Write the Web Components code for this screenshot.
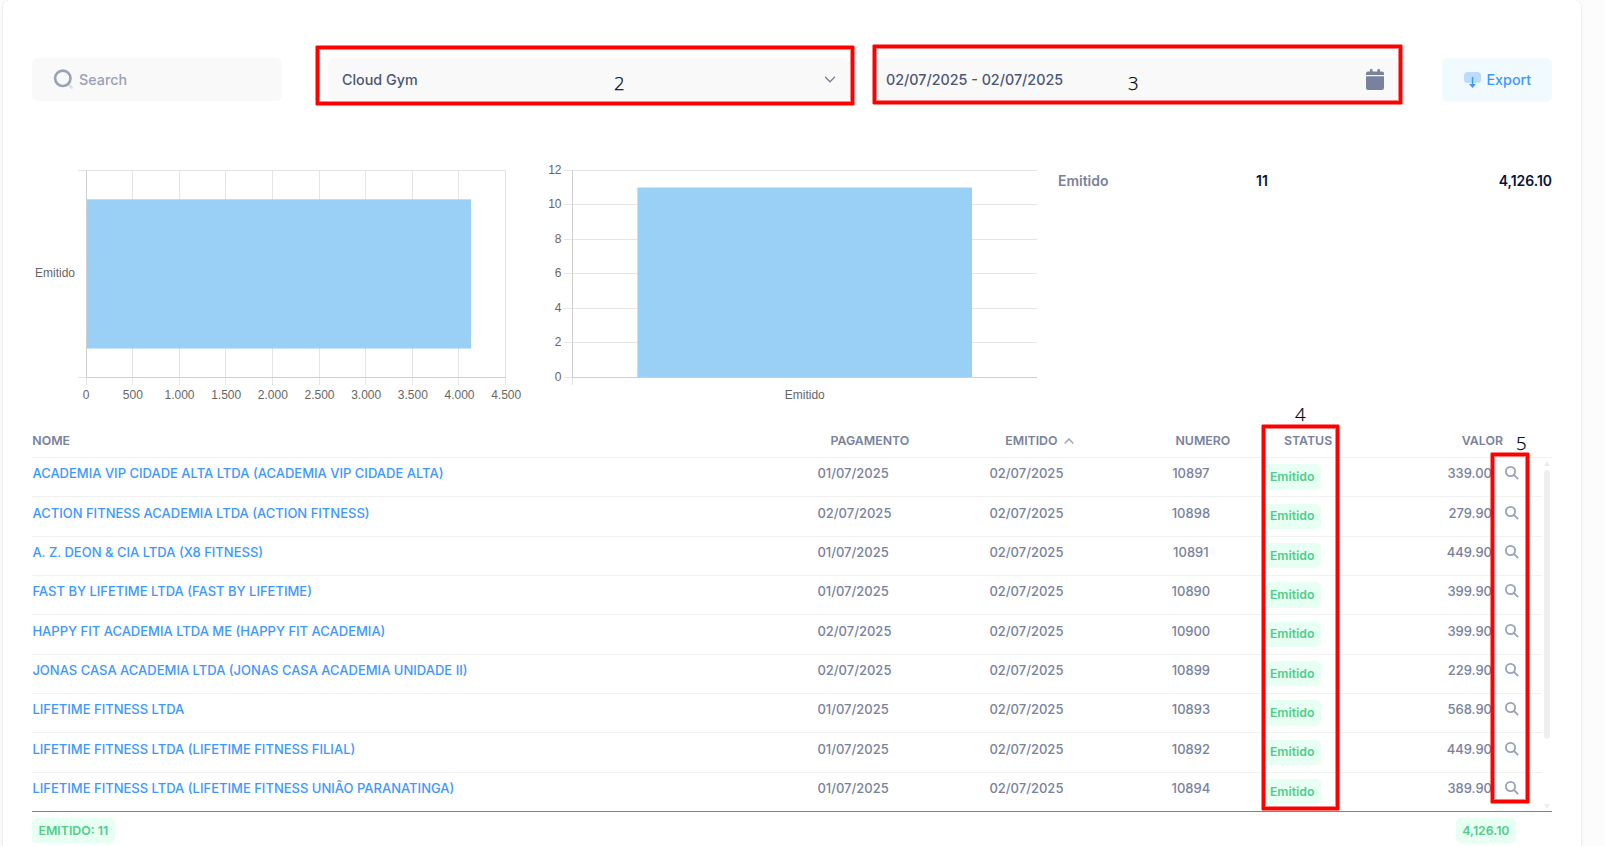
<!DOCTYPE html>
<html lang="pt-BR">
<head>
<meta charset="UTF-8">
<title>Notas emitidas</title>
<style>
  :root {
    --gray-100: #f9f9f9;
    --gray-200: #f1f1f2;
    --gray-500: #99a1b7;
    --gray-600: #78829d;
    --gray-700: #4b5675;
    --primary: #3e97ff;
    --primary-light: #f1faff;
    --success: #50cd89;
    --success-light: #e8fff3;
  }
  body {
    margin: 0;
    height: 846px;
    overflow: hidden;
    background: #fcfcfc;
    font-family: Inter, "Liberation Sans", sans-serif;
    font-size: 13px;
    color: var(--gray-700);
  }
</style>
</head>
<body>
<report-page></report-page>

<script>
const ROWS = [
  ['ACADEMIA VIP CIDADE ALTA LTDA (ACADEMIA VIP CIDADE ALTA)', '01/07/2025', '02/07/2025', '10897', '339.00'],
  ['ACTION FITNESS ACADEMIA LTDA (ACTION FITNESS)', '02/07/2025', '02/07/2025', '10898', '279.90'],
  ['A. Z. DEON & CIA LTDA (X8 FITNESS)', '01/07/2025', '02/07/2025', '10891', '449.90'],
  ['FAST BY LIFETIME LTDA (FAST BY LIFETIME)', '01/07/2025', '02/07/2025', '10890', '399.90'],
  ['HAPPY FIT ACADEMIA LTDA ME (HAPPY FIT ACADEMIA)', '02/07/2025', '02/07/2025', '10900', '399.90'],
  ['JONAS CASA ACADEMIA LTDA (JONAS CASA ACADEMIA UNIDADE II)', '02/07/2025', '02/07/2025', '10899', '229.90'],
  ['LIFETIME FITNESS LTDA', '01/07/2025', '02/07/2025', '10893', '568.90'],
  ['LIFETIME FITNESS LTDA (LIFETIME FITNESS FILIAL)', '01/07/2025', '02/07/2025', '10892', '449.90'],
  ['LIFETIME FITNESS LTDA (LIFETIME FITNESS UNIÃO PARANATINGA)', '01/07/2025', '02/07/2025', '10894', '389.90']
];

class SearchField extends HTMLElement {
  constructor() {
    super();
    this.attachShadow({ mode: 'open' });
  }

  connectedCallback() {
    this.shadowRoot.innerHTML = `
      <style>
        :host {
          display: flex;
          align-items: center;
          box-sizing: border-box;
          height: 43px;
          padding-left: 21px;
          gap: 5px;
          border-radius: 6px;
          background: var(--gray-100);
          color: var(--gray-500);
          font-size: 14.3px;
          font-weight: 500;
        }
        svg { flex: none; }
      </style>
      <svg width="21" height="21" viewBox="0 0 21 21" fill="none" stroke="#99a1b7">
        <path d="M16.6 16.6L18.7 18.7" stroke-width="2.6" stroke-linecap="round" opacity=".3"/>
        <circle cx="9.8" cy="9.3" r="7.7" stroke-width="2.6"/>
      </svg>
      <span><slot></slot></span>
    `;
  }
}

class PickerField extends HTMLElement {
  constructor() {
    super();
    this.attachShadow({ mode: 'open' });
  }

  connectedCallback() {
    this.shadowRoot.innerHTML = `
      <style>
        :host {
          display: flex;
          align-items: center;
          justify-content: space-between;
          box-sizing: border-box;
          height: 43px;
          padding: 0 13px 0 14px;
          border-radius: 6px;
          background: var(--gray-100);
          color: var(--gray-700);
          font-size: 14.3px;
          font-weight: 500;
        }
      </style>
      <span><slot></slot></span>
      <slot name="icon"></slot>
    `;
  }
}

class ExportButton extends HTMLElement {
  constructor() {
    super();
    this.attachShadow({ mode: 'open' });
  }

  connectedCallback() {
    this.shadowRoot.innerHTML = `
      <style>
        :host { display: block; }
        button {
          display: flex;
          align-items: center;
          width: 100%;
          height: 44px;
          padding: 0 0 1px 22px;
          gap: 5.5px;
          border: 0;
          border-radius: 6px;
          background: var(--primary-light);
          color: var(--primary);
          font: 500 14.3px Inter, sans-serif;
          cursor: pointer;
        }
      </style>
      <button>
        <svg width="17" height="18" viewBox="0 0 17 18" fill="#3e97ff">
          <rect x="0" y="1" width="17" height="11" rx="3.5" opacity=".3"/>
          <path d="M7.8 6h1.5v7h2.6L8.5 17 5.1 13h2.7z"/>
        </svg>
        <slot></slot>
      </button>
    `;
  }
}

class StatusBadge extends HTMLElement {
  constructor() {
    super();
    this.attachShadow({ mode: 'open' });
  }

  connectedCallback() {
    this.shadowRoot.innerHTML = `
      <style>
        :host {
          display: inline-flex;
          align-items: center;
          box-sizing: border-box;
          height: 25.3px;
          padding: 0 6.5px;
          border-radius: 5px;
          background: var(--success-light);
          color: var(--success);
          font-size: 12.35px;
          font-weight: 600;
          white-space: nowrap;
        }
      </style>
      <slot></slot>
    `;
  }
}

// Single-series bar chart, horizontal or vertical
class BarChart extends HTMLElement {
  constructor() {
    super();
    this.attachShadow({ mode: 'open' });
  }

  connectedCallback() {
    const horizontal = this.hasAttribute('horizontal');
    const max = Number(this.getAttribute('max'));
    const step = Number(this.getAttribute('step'));
    const value = Number(this.getAttribute('value'));
    const label = this.getAttribute('label');
    this.shadowRoot.innerHTML = `
      <style>
        :host { display: block; }
        svg { display: block; overflow: visible; }
        text { font: 12px "Liberation Sans", Arial, sans-serif; fill: #666; }
        .grid { fill: #e5e5e5; }
        .axis { fill: #cfcfcf; }
        .bar { fill: #9ad0f5; }
      </style>
      <svg width="490" height="240" viewBox="0 0 490 240">
        ${horizontal ? this.drawHorizontal(max, step, value, label) : this.drawVertical(max, step, value, label)}
      </svg>
    `;
  }

  rect(cls, x, y, w, h) {
    return `<rect class="${cls}" x="${x}" y="${y}" width="${w}" height="${h}"/>`;
  }

  drawHorizontal(max, step, value, label) {
    const left = 54, width = 420, top = 10, bottom = 217;
    let out = this.rect('grid', 46, top, 428, 1) + this.rect('grid', 46, bottom, 428, 1);
    for (let v = 0; v <= max; v += step) {
      const x = Math.floor(left + v / max * (width - 0.5));
      out += this.rect('grid', x, top, 1, 215);
      out += `<text x="${left + 0.2 + v / max * width}" y="239" text-anchor="middle">${v.toLocaleString('de-DE')}</text>`;
    }
    out += this.rect('bar', left, 39.3, value / max * width, 149.2);
    out += this.rect('axis', left, top, 1, 207) + this.rect('axis', left, bottom, 420, 1);
    out += `<text x="43" y="117" text-anchor="end">${label}</text>`;
    return out;
  }

  drawVertical(max, step, value, label) {
    const left = 27, top = 10, height = 207, bottom = 217;
    let out = this.rect('grid', left, top, 1, 215);
    for (let v = 0; v <= max; v += step) {
      const y = Math.floor(bottom - v / max * height + 0.4);
      out += this.rect('grid', left - 8, y, 473, 1);
      out += `<text x="${left - 10.5}" y="${y + 4}" text-anchor="end">${v}</text>`;
    }
    const barTop = bottom + 0.3 - value / max * height;
    out += this.rect('bar', 92.4, barTop, 334.6, bottom - barTop);
    out += this.rect('axis', left, top, 1, height) + this.rect('axis', left, bottom, 465, 1);
    out += `<text x="259.8" y="239" text-anchor="middle">${label}</text>`;
    return out;
  }
}

class SummaryLine extends HTMLElement {
  constructor() {
    super();
    this.attachShadow({ mode: 'open' });
  }

  connectedCallback() {
    this.shadowRoot.innerHTML = `
      <style>
        :host {
          display: grid;
          grid-template-columns: 198px 1fr auto;
          padding-top: 11.5px;
          font-size: 13.95px;
          line-height: 18px;
          font-weight: 600;
          color: #071437;
        }
        .label { color: var(--gray-600); }
      </style>
      <span class="label"><slot name="label"></slot></span>
      <span><slot name="count"></slot></span>
      <span><slot name="total"></slot></span>
    `;
  }
}

class InvoiceRow extends HTMLElement {
  constructor() {
    super();
    this.attachShadow({ mode: 'open' });
  }

  connectedCallback() {
    const [name, paid, issued, number, amount] = this.data;
    this.shadowRoot.innerHTML = `
      <style>
        :host {
          display: grid;
          grid-template-columns: var(--invoice-columns);
          box-sizing: border-box;
          height: 39.333px;
          padding: 5.4px 0 0 .4px;
          border-bottom: 1px solid var(--gray-200);
          color: var(--gray-600);
          font-weight: 500;
          line-height: 20px;
        }
        a { color: var(--primary); text-decoration: none; }
        .number { padding-right: 1px; text-align: center; }
        .status { padding: 1.1px 0 0 42px; line-height: 0; }
        .amount { text-align: right; }
        .action { padding: 3px 0 0 13px; line-height: 0; }
      </style>
      <a></a>
      <span>${paid}</span>
      <span>${issued}</span>
      <span class="number">${number}</span>
      <span class="status"><status-badge>Emitido</status-badge></span>
      <span class="amount">${amount}</span>
      <span class="action">
        <svg width="14" height="14" viewBox="0 0 14 14" fill="none" stroke="#99a1b7" stroke-width="1.8">
          <circle cx="5.5" cy="5.5" r="4.6"/>
          <path d="M8.9 8.9L13.2 13.2"/>
        </svg>
      </span>
    `;
    this.shadowRoot.querySelector('a').textContent = name;
  }
}

class InvoiceTable extends HTMLElement {
  constructor() {
    super();
    this.attachShadow({ mode: 'open' });
  }

  connectedCallback() {
    this.shadowRoot.innerHTML = `
      <style>
        :host {
          display: block;
          --invoice-columns: 785px 172px 172px 60px 100px 170.6px 1fr;
        }
        .head {
          display: grid;
          grid-template-columns: 798.2px 174.8px 170.2px 108.5px 1fr auto;
          box-sizing: border-box;
          height: 33px;
          padding: 0 49px 0 .3px;
          border-bottom: 1px solid var(--gray-200);
          color: var(--gray-600);
          font-size: 12.35px;
          font-weight: 600;
          line-height: 32px;
        }
        .head svg { margin: 0 0 1.5px 3.5px; }
        .body {
          display: flex;
          height: 353px;
          overflow: hidden;
        }
        .rows { width: 1510px; flex: none; }
        .scroll {
          display: flex;
          flex-direction: column;
          align-items: center;
          width: 10px;
          padding: 3px 0 2px;
          box-sizing: border-box;
        }
        .thumb {
          width: 6px;
          height: 269px;
          margin: 4px 0 auto;
          border-radius: 3px;
          background: #efefef;
        }
        .foot {
          display: flex;
          justify-content: space-between;
          padding: 6px 36px 0 0;
          border-top: 1px solid var(--gray-600);
        }
      </style>
      <div class="head">
        <span>NOME</span>
        <span>PAGAMENTO</span>
        <span>EMITIDO <svg width="10" height="6" viewBox="0 0 10 6" fill="none" stroke="#99a1b7" stroke-width="1.4"><path d="M.7 5.4L5 1.1l4.3 4.3"/></svg></span>
        <span>NUMERO</span>
        <span>STATUS</span>
        <span>VALOR</span>
      </div>
      <div class="body">
        <div class="rows"></div>
        <div class="scroll">
          <svg width="6" height="5" fill="#ececec"><path d="M3 0L6 5H0z"/></svg>
          <div class="thumb"></div>
          <svg width="6" height="5" fill="#ececec"><path d="M3 5L6 0H0z"/></svg>
        </div>
      </div>
      <div class="foot">
        <status-badge>EMITIDO: 11</status-badge>
        <status-badge>4,126.10</status-badge>
      </div>
    `;
    const rows = this.shadowRoot.querySelector('.rows');
    ROWS.forEach(data => {
      const row = document.createElement('invoice-row');
      row.data = data;
      rows.appendChild(row);
    });
  }
}

// Red frame with a step number, laid over the page
class CalloutBox extends HTMLElement {
  constructor() {
    super();
    this.attachShadow({ mode: 'open' });
  }

  connectedCallback() {
    const [x, y, w, h] = this.getAttribute('box').split(' ').map(Number);
    const [nx, ny] = this.getAttribute('number-at').split(' ').map(Number);
    this.shadowRoot.innerHTML = `
      <style>
        :host {
          position: absolute;
          left: ${x}px;
          top: ${y}px;
          width: ${w}px;
          height: ${h}px;
          pointer-events: none;
        }
        .frame {
          box-sizing: border-box;
          height: 100%;
          border: 1px solid rgba(255, 0, 0, .5);
          border-radius: 2px;
        }
        .line {
          box-sizing: border-box;
          height: 100%;
          border: 3px solid #f00;
          box-shadow: inset 0 0 0 1px rgba(255, 0, 0, .5);
        }
        .number {
          position: absolute;
          left: ${nx - x}px;
          top: ${ny - y}px;
          color: #000;
          font: 300 18.5px/14px "Open Sans", sans-serif;
          -webkit-text-stroke: .25px #000;
        }
      </style>
      <div class="frame"><div class="line"></div></div>
      <span class="number"><slot></slot></span>
    `;
  }
}

class ReportPage extends HTMLElement {
  constructor() {
    super();
    this.attachShadow({ mode: 'open' });
  }

  connectedCallback() {
    this.shadowRoot.innerHTML = `
      <style>
        :host { display: flow-root; position: relative; }
        .card {
          box-sizing: border-box;
          width: 1580px;
          height: 870px;
          margin: -1px 0 0 2px;
          padding: 58px 29px 0;
          border: 1px solid var(--gray-200);
          border-radius: 8px;
          background: #fff;
          box-shadow: 0 3px 4px rgba(0, 0, 0, .03);
        }
        .toolbar {
          display: flex;
          height: 44px;
        }
        search-field { width: 250px; }
        .unit { width: 522px; margin-left: 46px; }
        .period { width: 524.5px; margin-left: 22px; }
        export-button { width: 110px; margin-left: auto; }
        .charts {
          display: grid;
          grid-template-columns: 490px 490px 494px;
          justify-content: space-between;
          height: 265px;
          margin-top: 58px;
        }
      </style>
      <div class="card">
        <div class="toolbar">
          <search-field>Search</search-field>
          <picker-field class="unit">
            Cloud Gym
            <svg slot="icon" width="12" height="7" viewBox="0 0 12 7" fill="none" stroke="#78829d" stroke-width="1.3"><path d="M0 .8l5 5 5-5"/></svg>
          </picker-field>
          <picker-field class="period">
            02/07/2025 - 02/07/2025
            <svg slot="icon" width="18" height="21" viewBox="0 0 18 21" fill="#78829d"><path d="M2 2.5h2V1.2a1.2 1.2 0 0 1 2.6 0v1.3h4.8V1.2a1.2 1.2 0 0 1 2.6 0v1.3h2a2 2 0 0 1 2 2V6H0V4.5a2 2 0 0 1 2-2zM0 7.3h18V19a2 2 0 0 1-2 2H2a2 2 0 0 1-2-2z"/></svg>
          </picker-field>
          <export-button>Export</export-button>
        </div>
        <div class="charts">
          <bar-chart horizontal max="4500" step="500" value="4126.1" label="Emitido"></bar-chart>
          <bar-chart max="12" step="2" value="11" label="Emitido"></bar-chart>
          <summary-line>
            <span slot="label">Emitido</span>
            <span slot="count">11</span>
            <span slot="total">4,126.10</span>
          </summary-line>
        </div>
        <invoice-table></invoice-table>
      </div>
      <callout-box box="315 45 540 61" number-at="614 76">2</callout-box>
      <callout-box box="872 44 531 61" number-at="1128 76">3</callout-box>
      <callout-box box="1261 424 79 387" number-at="1295 407">4</callout-box>
      <callout-box box="1490 452 40 352" number-at="1516 436">5</callout-box>
    `;
  }
}

customElements.define('search-field', SearchField);
customElements.define('picker-field', PickerField);
customElements.define('export-button', ExportButton);
customElements.define('status-badge', StatusBadge);
customElements.define('bar-chart', BarChart);
customElements.define('summary-line', SummaryLine);
customElements.define('invoice-row', InvoiceRow);
customElements.define('invoice-table', InvoiceTable);
customElements.define('callout-box', CalloutBox);
customElements.define('report-page', ReportPage);
</script>
</body>
</html>
